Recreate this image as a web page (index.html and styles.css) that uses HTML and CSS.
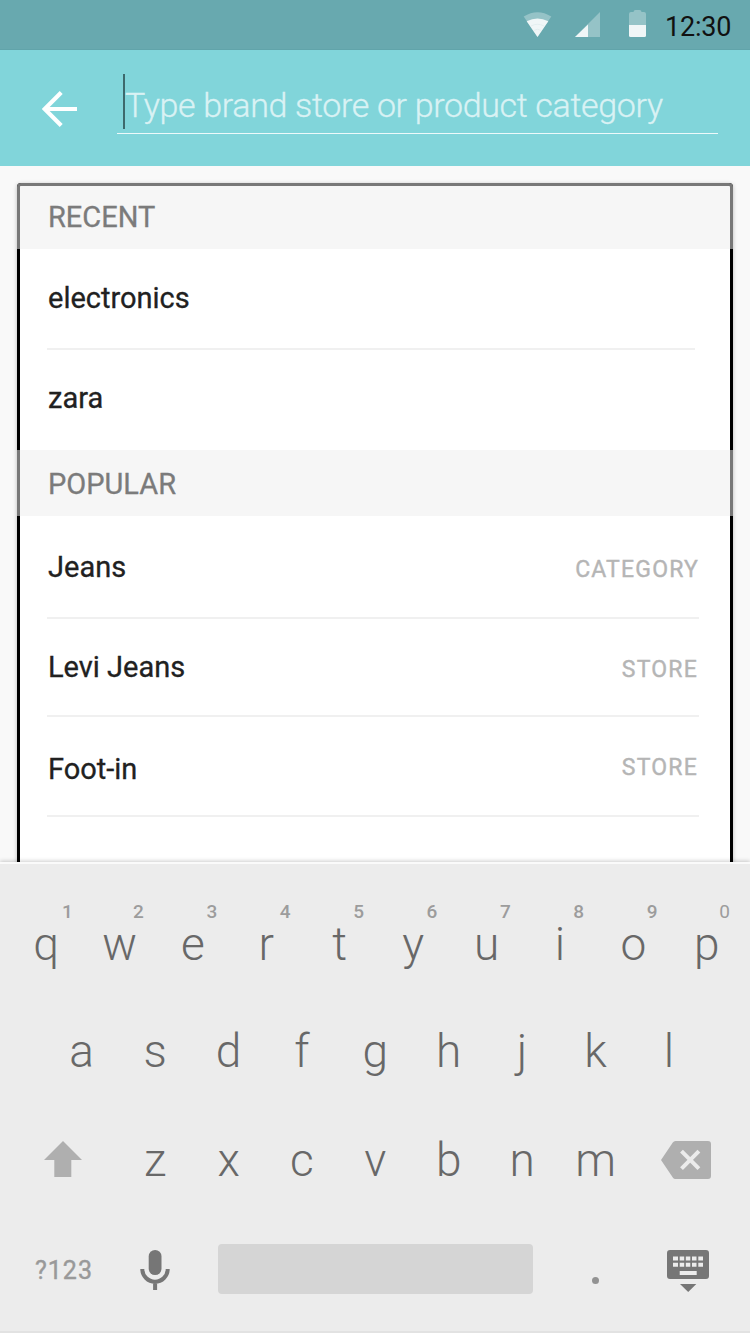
FILE: index.html
```
<!DOCTYPE html>
<html lang="en">
<head>
<meta charset="utf-8">
<title>Search</title>
<link rel="stylesheet" href="styles.css">
</head>
<body>
<div class="screen">
  <div class="status">
    <svg class="status-icons" width="125" height="30" viewBox="523 8 125 30">
      <path d="M523.7 16.6Q537.5 8 551.3 16.6L537.5 37z" fill="#95c3c7"/>
      <path d="M526.7 21.3Q537.5 15.500 548.3 21.3L537.5 37z" fill="#f0f6f7"/>
      <path d="M531 26Q537.5 22.5 544 26M533.5 30.5Q537.5 28 541.5 30.5" fill="none" stroke="#dfecee" stroke-width=".8"/>
      <path d="M600 12v25h-25z" fill="#95c3c7"/>
      <path d="M588 24.5V37h-13z" fill="#f0f6f7"/>
      <path d="M629 14q0-2 2-2h2.500q0-2 2-2h4q2 0 2 2h2.500q2 0 2 2v11h-17z" fill="#95c3c7"/>
      <path d="M629 25h17v10.500q0 1.500-1.500 1.500h-14q-1.500 0-1.500-1.500z" fill="#f0f6f7"/>
    </svg>
    <span class="clock">12:30</span>
  </div>
  <header class="appbar">
    <svg class="back" width="36" height="36" viewBox="0 0 36 36"><path d="M19.200 1.500L2.700 18l16.500 16.500M2.700 18H35" fill="none" stroke="#fff" stroke-width="4.200"/></svg>
    <div class="field"><span class="caret"></span><span class="hint">Type brand store or product category</span></div>
  </header>
  <main class="content">
    <section class="card">
      <h2 class="heading recent">RECENT</h2>
      <div class="row short"><span class="name electronics">electronics</span></div>
      <div class="row last"><span class="name">zara</span></div>
      <h2 class="heading popular">POPULAR</h2>
      <div class="row first"><span class="name">Jeans</span><span class="tag category">CATEGORY</span></div>
      <div class="row levi"><span class="name">Levi Jeans</span><span class="tag">STORE</span></div>
      <div class="row foot"><span class="name">Foot-in</span><span class="tag">STORE</span></div>
    </section>
  </main>
  <div class="keyboard">
    <div class="keys top">
      <span class="key">q<sup class="one">1</sup></span><span class="key">w<sup>2</sup></span><span class="key">e<sup>3</sup></span><span class="key">r<sup>4</sup></span><span class="key">t<sup>5</sup></span><span class="key">y<sup>6</sup></span><span class="key">u<sup>7</sup></span><span class="key">i<sup>8</sup></span><span class="key">o<sup>9</sup></span><span class="key">p<sup class="light">0</sup></span>
    </div>
    <div class="keys middle">
      <span class="key">a</span><span class="key">s</span><span class="key">d</span><span class="key">f</span><span class="key">g</span><span class="key">h</span><span class="key">j</span><span class="key">k</span><span class="key">l</span>
    </div>
    <div class="keys lower">
      <svg class="shift" width="38" height="36" viewBox="0 0 38 36"><path d="M19 0l19 19H27.300v17h-17V19H0z" fill="#afafaf"/></svg>
      <span class="key">z</span><span class="key">x</span><span class="key">c</span><span class="key">v</span><span class="key">b</span><span class="key">n</span><span class="key">m</span>
      <svg class="delete" width="50" height="38" viewBox="0 0 50 38"><path d="M14.500 0H47q3 0 3 3v32q0 3-3 3H14.500q-1.700 0-2.700-1.600L0 19 11.800 1.600Q12.800 0 14.500 0z" fill="#afafaf"/><path d="M20.500 10.200l17.400 17.400M37.900 10.200L20.500 27.600" stroke="#ececec" stroke-width="4"/></svg>
    </div>
    <div class="keys bottom">
      <span class="symbols">?123</span>
      <svg class="mic" width="30" height="40" viewBox="0 0 30 40"><rect x="8.700" width="12.800" height="25" rx="6.400" fill="#767676"/><path d="M2.300 19a12.600 12.600 0 0 0 25.400 0M15.100 31v9" fill="none" stroke="#767676" stroke-width="4"/></svg>
      <span class="space"></span>
      <span class="period"></span>
      <svg class="hide" width="42" height="42" viewBox="0 0 42 42"><path fill="#767676" fill-rule="evenodd" d="M3 0h36q3 0 3 3v23q0 3-3 3H3q-3 0-3-3V3q0-3 3-3zM6 6.500h5v4H6zm6.700 0h4.500v4h-4.500zm6.100 0h4.500v4h-4.500zm6.200 0h4.500v4H25zm6.300 0h4.700v4h-4.700zM6 12.700h5v4H6zm6.700 0h4.500v4h-4.500zm6.100 0h4.500v4h-4.500zm6.200 0h4.500v4H25zm6.300 0h4.700v4h-4.700zM12.700 21h17v4h-17zM13 34h16.300L21.200 42z"/></svg>
    </div>
  </div>
</div>
</body>
</html>
```
FILE: styles.css
```
* { box-sizing: border-box; }
body { margin: 0; font-family: Roboto, sans-serif; }
.screen { width: 750px; height: 1333px; display: flex; flex-direction: column; overflow: hidden; background: #f9f9f9; }
.status { height: 50px; flex: none; display: flex; padding: 8px 0 0 523px; background: #68a9af; border-bottom: 1px solid #61a4aa; }
.clock { margin: 1px 0 0 17px; font-size: 27px; line-height: 36px; color: #111; letter-spacing: -.2px; }
.appbar { height: 116px; flex: none; display: flex; background: #81d5da; }
.back { margin: 41px 39px 0 42px; }
.field { width: 601px; height: 84px; display: flex; padding: 24px 0 0 6px; border-bottom: 1px solid #edf9fa; white-space: nowrap; }
.caret { width: 2px; height: 55px; background: #3d696c; }
.hint { margin-top: 11px; font-size: 34px; line-height: 40px; font-weight: 300; letter-spacing: -.34px; color: #d9f2f4; -webkit-text-stroke: .35px #d9f2f4; }
.content { height: 696px; flex: none; padding: 17px 17px 0; overflow: hidden; }
.card { height: 720px; border: 3px solid #000; border-radius: 4px; background: #fff; box-shadow: 0 1px 4px rgba(0,0,0,.25); }
.heading { position: relative; z-index: 1; height: 66px; margin: 0 -3px; padding-left: 28px; border: solid #787878; border-width: 0 3px; background: #f6f6f6; font-size: 29px; line-height: 68px; font-weight: 400; color: #7b7b7b; -webkit-text-stroke: .3px #7b7b7b; }
.recent { margin-top: -3px; border-top-width: 3px; border-radius: 4px 4px 0 0; line-height: 62px; }
.row { height: 100px; margin: 0 31px 0 27px; display: flex; justify-content: space-between; border-bottom: 2px solid #f0f0f0; line-height: 98px; }
.short { height: 101px; margin-right: 35px; }
.last { border: 0; line-height: 96px; }
.first { height: 103px; line-height: 102px; }
.levi { height: 98px; }
.name { padding-left: 1px; font-size: 29px; color: #212121; -webkit-text-stroke: .3px #212121; }
.tag { margin-top: 2px; padding-right: 1px; font-size: 23px; letter-spacing: 1.2px; color: #b5b5b5; -webkit-text-stroke: .4px #b5b5b5; }
.category { margin-top: 3px; padding-right: 0; }
.levi .name { margin-top: -1px; }
.foot .name { margin-top: 3px; }
.foot .tag { margin-top: 2px; }
.keyboard { position: relative; z-index: 2; height: 471px; flex: none; padding-top: 41px; background: #ececec; border-top: 2px solid #fafafa; border-bottom: 2px solid #e2e2e2; box-shadow: 0 -1px 4px rgba(0,0,0,.2); }
.keys { height: 108px; display: flex; }
.key { position: relative; width: 73.4px; font-size: 46px; line-height: 78px; font-weight: 300; text-align: center; color: #686868; }
.key sup { position: absolute; left: 45.500px; top: -4px; width: 20px; font-size: 19px; line-height: 22px; font-weight: 500; color: #9c9c9c; }
.key .one { left: 48px; }
.key .light { font-weight: 400; left: 44.500px; }
.top { padding-left: 9.500px; }
.middle { padding-left: 45px; }
.middle .key { line-height: 76px; }
.lower { padding-left: 44px; }
.shift { margin: 20px 36.500px 0 0; }
.delete { margin: 20px 0 0 28.500px; }
.bottom { padding-left: 35px; }
.symbols { width: 105px; margin-top: 12px; font-size: 25px; line-height: 60px; letter-spacing: 1px; color: #999; -webkit-text-stroke: .4px #999; }
.mic { margin-top: 21px; }
.space { width: 315px; height: 50px; margin: 15px 0 0 48px; border-radius: 4px; background: #d5d5d5; }
.period { width: 7px; height: 7px; margin: 48px 68px 0 59px; border-radius: 50%; background: #929292; }
.hide { margin-top: 21px; }
```
